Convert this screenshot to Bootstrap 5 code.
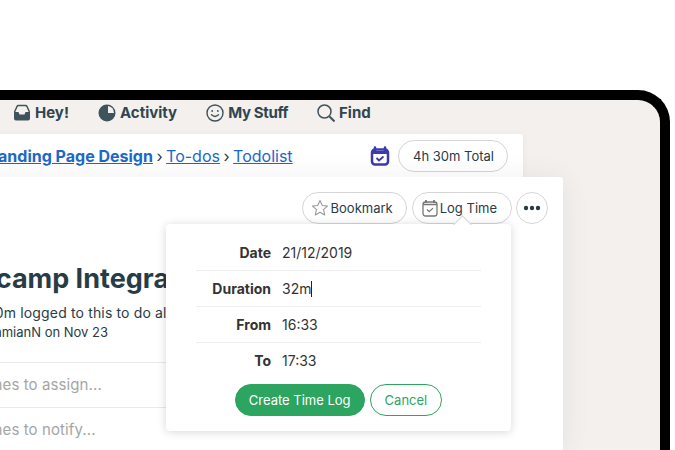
<!DOCTYPE html>
<html lang="en">
<head>
    <meta charset="UTF-8">
    <meta name="viewport" content="width=device-width, initial-scale=1.0">
    <title>Log Time</title>
    <link href="https://cdn.jsdelivr.net/npm/bootstrap@5.3.0/dist/css/bootstrap.min.css" rel="stylesheet">
    <style>
        html, body {
            height: 100%;
            overflow: hidden;
        }
        body {
            font-family: "Inter", "Liberation Sans", sans-serif;
            background-color: #fff;
            color: #283c46;
        }
        .app-frame {
            width: 710px;
            height: 360px;
            margin: 90px 0 0 -40px;
            border: 10px solid #000;
            border-bottom: 0;
            border-radius: 0 32px 0 0;
            background-color: #f4f0ed;
            overflow: hidden;
        }
        .top-nav {
            height: 34px;
            padding: 0 0 8px 43px;
            gap: 29px;
            font-size: 15px;
            font-weight: 700;
            color: #2f4550;
        }
        .top-nav svg {
            width: 18px;
            height: 18px;
            margin-right: 4px;
        }
        .nav-tight {
            letter-spacing: -.35px;
        }
        .back-sheet {
            width: 553px;
            height: 43px;
            border-radius: 0 3px 0 0;
            padding: 0 15px 0 0;
            box-shadow: 0 1px 6px rgba(0, 0, 0, .06);
        }
        .crumbs {
            margin-left: 19px;
            font-size: 16px;
        }
        .crumbs a {
            color: #1d68c8;
        }
        .crumbs b {
            font-weight: 700;
        }
        .crumb-sep {
            margin: 0 -1px;
        }
        .pill-btn {
            height: 32px;
            padding: 0 14px;
            font-size: 13px;
            line-height: 30px;
            color: #283c46;
            background: #fff;
            border: 1px solid #d5d5d5;
            white-space: nowrap;
        }
        .total-btn {
            padding: 0 13px 0 14px;
        }
        .main-sheet {
            position: relative;
            width: 593px;
            height: 273px;
            padding: 15px 15px 0 0;
            border-radius: 0 3px 0 0;
            box-shadow: 0 2px 30px rgba(0, 0, 0, .07);
        }
        .action-row {
            gap: 4px;
        }
        .tool-btn {
            gap: 2px;
            padding-left: 9px;
        }
        .bookmark-btn {
            gap: 2px;
            margin-right: 1px;
            padding: 0 13px 0 8px;
        }
        .dots-btn {
            width: 32px;
            padding: 0;
            font-size: 0;
        }
        .todo-head {
            margin: 37px 0 0 -39px;
            font-size: 27px;
            font-weight: 700;
            line-height: 36px;
            white-space: nowrap;
        }
        .todo-note {
            font-size: 14px;
            line-height: 21px;
            letter-spacing: .15px;
            white-space: nowrap;
        }
        .todo-note-a {
            margin: 5px 0 0 16px;
        }
        .todo-note-b {
            margin: -1px 0 0 15px;
            font-size: 13px;
            letter-spacing: 0;
        }
        .people-row {
            width: 300px;
            height: 45px;
            font-size: 15px;
            line-height: 44px;
            letter-spacing: .1px;
            text-indent: -38px;
            color: #a5a5a5;
            border-top: 1px solid #e9e9e9;
            white-space: nowrap;
        }
        .people-first {
            margin-top: 19px;
        }
        .time-pop {
            position: absolute;
            top: 47px;
            left: 196px;
            width: 345px;
            height: 207px;
            padding: 11px 30px 0;
            border-radius: 4px;
            box-shadow: 0 1px 10px rgba(0, 0, 0, .16);
        }
        .time-pop::before {
            content: "";
            position: absolute;
            top: -6px;
            left: 290px;
            width: 13px;
            height: 13px;
            background: #fff;
            border-top: 1px solid #d5d5d5;
            border-left: 1px solid #d5d5d5;
            transform: rotate(45deg);
        }
        .log-row {
            height: 36px;
            font-size: 14px;
            line-height: 35px;
            color: #333;
            border-bottom: 1px solid #eee;
        }
        .log-row-end {
            border-bottom: 0;
        }
        .log-label {
            width: 75px;
            margin-right: 11px;
            text-align: right;
            font-weight: 700;
        }
        .caret-mark {
            display: inline-block;
            width: 1px;
            height: 16px;
            vertical-align: -3px;
            background: #222;
        }
        .log-actions {
            gap: 5px;
            margin-top: 5px;
        }
        .btn-log {
            padding: 0 13px;
            color: #fff;
            background: #2ca561;
            border-color: #2ca561;
        }
        .btn-skip {
            color: #2ca561;
            border-color: #2ca561;
        }
    </style>
</head>
<body>

    <div class="app-frame">
        <nav class="top-nav d-flex align-items-center">
            <div class="d-flex align-items-center">
                <svg viewBox="0 0 18 18"><path d="M1.500 8 4 2.500q.4-.9 1.400-.9h7.200q1 0 1.400.9L16.500 8" fill="none" stroke="#3f535d" stroke-width="1.500"/><path d="M1 8h4.500l1 2.500h5l1-2.500H17v6.500q0 2-2 2H3q-2 0-2-2z" fill="#3f535d"/></svg>
                <span>Hey!</span>
            </div>
            <div class="d-flex align-items-center">
                <svg viewBox="0 0 18 18"><circle cx="9" cy="9" r="8.500" fill="#3f535d"/><path d="M10 2a7 7 0 0 1 6 7h-6z" fill="#f4f0ed"/></svg>
                <span>Activity</span>
            </div>
            <div class="d-flex align-items-center">
                <svg viewBox="0 0 18 18" fill="none" stroke="#3f535d" stroke-width="1.400"><circle cx="9" cy="9" r="8"/><path d="M5.500 10.800q3.500 3.200 7 0" stroke-linecap="round"/><circle cx="6.200" cy="7" r=".9" fill="#3f535d" stroke="none"/><circle cx="11.800" cy="7" r=".9" fill="#3f535d" stroke="none"/></svg>
                <span class="nav-tight">My Stuff</span>
            </div>
            <div class="d-flex align-items-center">
                <svg viewBox="0 0 18 18" fill="none" stroke="#3f535d" stroke-width="1.500"><circle cx="7.500" cy="7.500" r="6.500"/><path d="m12.500 12.500 5 5" stroke-width="2"/></svg>
                <span>Find</span>
            </div>
        </nav>

        <div class="back-sheet bg-white d-flex align-items-center justify-content-between">
            <div class="crumbs text-nowrap">
                <a href="#"><b>Landing Page Design</b></a> <span class="crumb-sep">›</span> <a href="#">To-dos</a> <span class="crumb-sep">›</span> <a href="#">Todolist</a>
            </div>
            <div class="d-flex align-items-center gap-2">
                <svg width="20" height="20" viewBox="0 0 20 20"><path d="M5 1.500v3M15 1.500v3" stroke="#3b3bac" stroke-width="2.500" stroke-linecap="round"/><rect x="2" y="3.500" width="16" height="15" rx="3" fill="none" stroke="#3b3bac" stroke-width="2.500"/><path d="M3 5h14v3H3z" fill="#3b3bac"/><path d="m6.500 12 2.500 2.500 4.500-4" fill="none" stroke="#3b3bac" stroke-width="1.800"/></svg>
                <span class="btn pill-btn total-btn rounded-pill">4h 30m Total</span>
            </div>
        </div>

        <section class="main-sheet bg-white">
            <div class="action-row d-flex justify-content-end">
                <span class="btn pill-btn bookmark-btn rounded-pill d-flex align-items-center">
                    <svg width="18" height="18" viewBox="0 0 18 18"><path d="m9 1.500 2.300 5 5.200.6-3.900 3.500 1.100 5.400L9 13.300 4.300 16l1.100-5.400L1.500 7.100l5.200-.6z" fill="none" stroke="#9a9a9a" stroke-width="1.100" stroke-linejoin="round"/></svg>
                    Bookmark
                </span>
                <span class="btn pill-btn tool-btn rounded-pill d-flex align-items-center">
                    <svg width="16" height="18" viewBox="0 0 16 18" fill="none" stroke="#777"><rect x="1" y="3" width="14" height="14" rx="2.500" stroke-width="1.300"/><path d="M4 1v3M12 1v3" stroke-width="1.800"/><path d="M1 5.500h14" stroke-width="1.500"/><path d="m5 10.500 2.200 2.200 3.800-3.600" stroke-width="1.300"/></svg>
                    Log Time
                </span>
                <span class="btn pill-btn dots-btn rounded-circle d-flex align-items-center justify-content-center">
                    <svg width="18" height="6" viewBox="0 0 18 6" fill="#283c46"><circle cx="3" cy="3" r="2.200"/><circle cx="9" cy="3" r="2.200"/><circle cx="15" cy="3" r="2.200"/></svg>
                </span>
            </div>

            <h1 class="todo-head mb-0">Basecamp Integration</h1>
            <p class="todo-note todo-note-a mb-0">30m logged to this to do all</p>
            <p class="todo-note todo-note-b mb-0">DamianN on Nov 23</p>
            <div class="people-row people-first">Type names to assign...</div>
            <div class="people-row">Type names to notify...</div>

            <div class="time-pop bg-white">
                <div class="log-row d-flex"><div class="log-label">Date</div><div>21/12/2019</div></div>
                <div class="log-row d-flex"><div class="log-label">Duration</div><div>32m<span class="caret-mark"></span></div></div>
                <div class="log-row d-flex"><div class="log-label">From</div><div>16:33</div></div>
                <div class="log-row log-row-end d-flex"><div class="log-label">To</div><div>17:33</div></div>
                <div class="log-actions d-flex justify-content-center">
                    <button class="btn pill-btn btn-log rounded-pill" type="button">Create Time Log</button>
                    <button class="btn pill-btn btn-skip rounded-pill" type="button">Cancel</button>
                </div>
            </div>
        </section>
    </div>

    <script src="https://cdn.jsdelivr.net/npm/bootstrap@5.3.0/dist/js/bootstrap.bundle.min.js"></script>
</body>
</html>
